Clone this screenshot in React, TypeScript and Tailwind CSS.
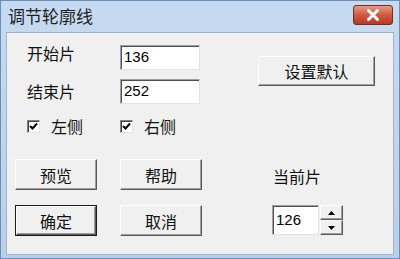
import React from "react";

const cjk = { fontFamily: '"Noto Sans CJK SC", "Noto Sans", sans-serif' };
const num = { fontFamily: '"Liberation Sans", Arial, sans-serif' };

function Btn({ label, w, h, def }: { label: string; w: string; h: string; def?: boolean }) {
  return (
    <div className={`${w} ${h} ${def ? "border border-[#1a1a1a]" : ""} flex`}>
      <div className="flex-1 flex items-center justify-center bg-[#f0f0f0] border-t border-l border-white border-b border-r border-b-[#5a5a5a] border-r-[#5a5a5a] shadow-[inset_-1px_-1px_0_#a0a0a0] text-[16px] leading-none text-[#111]" style={cjk}>
        {label}
      </div>
    </div>
  );
}

function Field({ value, w }: { value: string; w: string }) {
  return (
    <div className={`${w} h-[25px] bg-white border-t border-l border-[#a0a0a0] border-b-[#e3e3e3] border-r-[#e3e3e3] border-b border-r shadow-[inset_1px_1px_0_#505050] flex items-center pl-[3px] text-[15px] text-black`} style={num}>
      {value}
    </div>
  );
}

function Check({ label }: { label: string }) {
  return (
    <div className="flex items-center">
      <div className="w-[13px] h-[13px] bg-white border-t border-l border-[#808080] border-b border-r border-b-[#e3e3e3] border-r-[#e3e3e3] shadow-[inset_1px_1px_0_#404040] flex items-center justify-center">
        <svg width="9" height="9" viewBox="0 0 9 9">
          <path d="M1 4 L3.5 6.5 L8 1.5" stroke="#000" strokeWidth="2" fill="none" />
        </svg>
      </div>
      <span className="ml-[11px] text-[16px] leading-none text-[#111]" style={cjk}>{label}</span>
    </div>
  );
}

export default function App() {
  return (
    <div className="w-[400px] h-[259px] bg-gradient-to-b from-[#c6daf1] to-[#b9d0ea] border border-[#6e8fb5] flex flex-col overflow-hidden">
      <div className="h-[31px] flex items-center pl-[7px] pr-[6px] shrink-0">
        <span className="text-[17px] leading-none text-[#1e1e1e] mt-[-2px]" style={cjk}>调节轮廓线</span>
        <div className="ml-auto w-[40px] h-[20px] mt-[-4px] rounded-[3px] border border-[#7a2a1e] bg-gradient-to-b from-[#e59a86] via-[#cf5a40] to-[#b73a22] flex items-center justify-center">
          <svg width="14" height="12" viewBox="0 0 14 12">
            <path d="M2.5 1.5 L11.5 10.5 M11.5 1.5 L2.5 10.5" stroke="#ffffff" strokeWidth="3" strokeLinecap="round" />
          </svg>
        </div>
      </div>
      <div className="flex-1 mx-[5px] mb-[3px] bg-[#f0f0f0] border border-[#9fb4cd] flex">
        <div className="w-[251px] pl-[8px] flex flex-col">
          <div className="flex mt-[12px] pl-[12px]">
            <span className="w-[93px] text-[16px] leading-none text-[#111] mt-[0px]" style={cjk}>开始片</span>
            <Field value="136" w="w-[80px]" />
          </div>
          <div className="flex mt-[9px] pl-[12px] items-center">
            <span className="w-[93px] text-[16px] leading-none text-[#111] mt-[-2px]" style={cjk}>结束片</span>
            <Field value="252" w="w-[80px]" />
          </div>
          <div className="flex mt-[14px] pl-[12px]">
            <div className="w-[93px]"><Check label="左侧" /></div>
            <Check label="右侧" />
          </div>
          <div className="flex mt-[25px] gap-[23px]">
            <Btn label="预览" w="w-[82px]" h="h-[31px]" />
            <Btn label="帮助" w="w-[82px]" h="h-[31px]" />
          </div>
          <div className="flex mt-[15px] gap-[23px]">
            <Btn label="确定" w="w-[82px]" h="h-[31px]" def />
            <Btn label="取消" w="w-[82px]" h="h-[31px]" />
          </div>
        </div>
        <div className="flex flex-col">
          <div className="mt-[23px]">
            <Btn label="设置默认" w="w-[117px]" h="h-[30px]" />
          </div>
          <span className="mt-[82px] ml-[15px] text-[16px] leading-none text-[#111]" style={cjk}>当前片</span>
          <div className="flex mt-[21px] ml-[14px] items-start">
            <div className="w-[47px] h-[30px] bg-white border-t border-l border-[#a0a0a0] border-b border-r border-b-[#e3e3e3] border-r-[#e3e3e3] shadow-[inset_1px_1px_0_#505050] flex items-center pl-[3px] text-[15px]" style={num}>126</div>
            <div className="flex flex-col ml-[1px]">
              <div className="w-[23px] h-[15px] bg-[#f0f0f0] border-t border-l border-white border-b border-r border-b-[#5a5a5a] border-r-[#5a5a5a] shadow-[inset_-1px_-1px_0_#a0a0a0] flex items-center justify-center">
                <svg width="7" height="4" viewBox="0 0 7 4"><path d="M3.5 0 L7 4 L0 4 Z" fill="#000" /></svg>
              </div>
              <div className="w-[23px] h-[15px] bg-[#f0f0f0] border-t border-l border-white border-b border-r border-b-[#5a5a5a] border-r-[#5a5a5a] shadow-[inset_-1px_-1px_0_#a0a0a0] flex items-center justify-center">
                <svg width="7" height="4" viewBox="0 0 7 4"><path d="M0 0 L7 0 L3.5 4 Z" fill="#000" /></svg>
              </div>
            </div>
          </div>
        </div>
      </div>
    </div>
  );
}
